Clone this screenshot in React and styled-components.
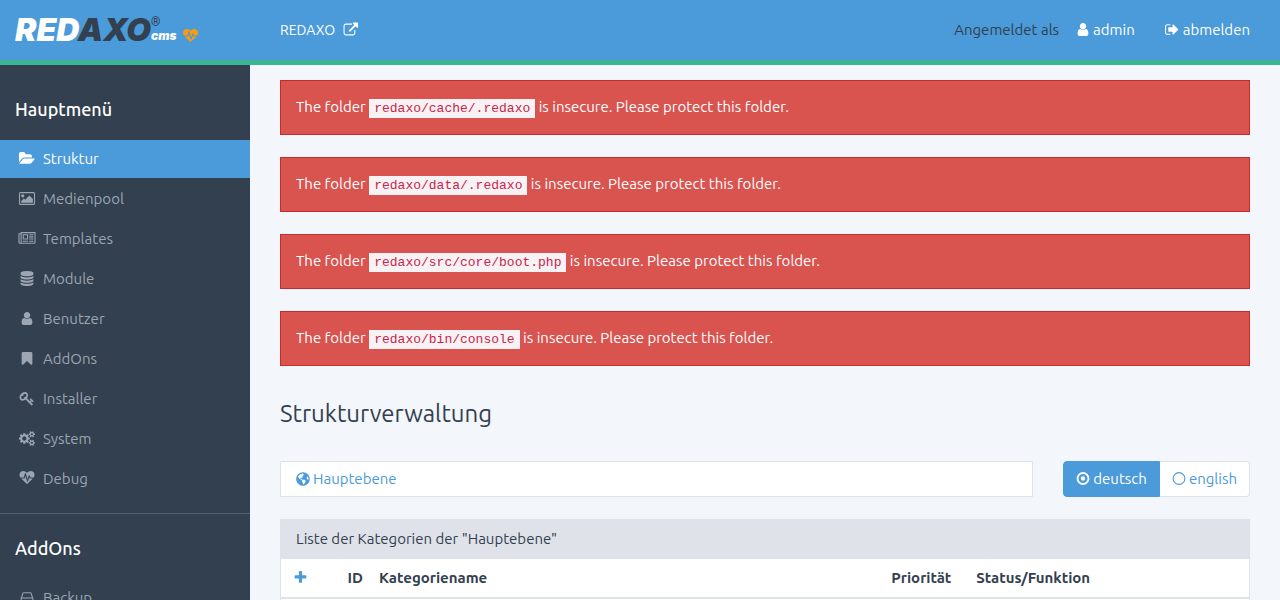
import React from "react";
import styled, { createGlobalStyle } from "styled-components";
import { FaGlobeAmericas } from "react-icons/fa";

const c = {
  blue: "#4b9ad9",
  green: "#3bb594",
  dark: "#324050",
  muted: "#9ca5b2",
  page: "#f3f6fb",
  line: "#dfe3e9",
};

const Global = createGlobalStyle`
  *, *::before, *::after { box-sizing: border-box; }
  body {
    margin: 0;
    background: ${c.page};
    color: ${c.dark};
    font: 15px/22px "Ubuntu", "Noto Sans", sans-serif;
  }
  a { color: inherit; text-decoration: none; }
`;

/* Glyphs on a 1792-unit em: advance box [left, width] and outline. */
const glyphs = {
  user: [256, 1280, "M1536 1399q0 109-62.5 187t-150.5 78h-854q-88 0-150.5-78t-62.5-187q0-85 8.5-160.5t31.5-152 58.5-131 94-89 134.5-34.5q131 128 313 128t313-128q76 0 134.5 34.5t94 89 58.5 131 31.5 152 8.5 160.5zm-256-887q0 159-112.5 271.5t-271.5 112.5-271.5-112.5-112.5-271.5 112.5-271.5 271.5-112.5 271.5 112.5 112.5 271.5z"],
  signOut: [64, 1664, "M704 1440q0 4 1 20t.5 26.5-3 23.5-10 19.5-20.5 6.5h-320q-119 0-203.5-84.5t-84.5-203.5v-704q0-119 84.5-203.5t203.5-84.5h320q13 0 22.5 9.5t9.5 22.5q0 4 1 20t.5 26.5-3 23.5-10 19.5-20.5 6.5h-320q-66 0-113 47t-47 113v704q0 66 47 113t113 47h312l11.5 1 11.5 3 8 5.5 7 9 2 13.5zm928-544q0 26-19 45l-544 544q-19 19-45 19t-45-19-19-45v-288h-448q-26 0-45-19t-19-45v-384q0-26 19-45t45-19h448v-288q0-26 19-45t45-19 45 19l544 544q19 19 19 45z"],
  external: [0, 1792, "M1472 992v320q0 119-84.5 203.5t-203.5 84.5h-832q-119 0-203.5-84.5t-84.5-203.5v-832q0-119 84.5-203.5t203.5-84.5h704q14 0 23 9t9 23v64q0 14-9 23t-23 9h-704q-66 0-113 47t-47 113v832q0 66 47 113t113 47h832q66 0 113-47t47-113v-320q0-14 9-23t23-9h64q14 0 23 9t9 23zm320-864v512q0 26-19 45t-45 19-45-19l-176-176-652 652q-10 10-23 10t-23-10l-114-114q-10-10-10-23t10-23l652-652-176-176q-19-19-19-45t19-45 45-19h512q26 0 45 19t19 45z"],
  folder: [0, 1920, "M1879 952q0 31-31 66l-336 396q-43 51-120.5 86.5t-143.5 35.5h-1088q-34 0-60.5-13t-26.5-43q0-31 31-66l336-396q43-51 120.5-86.5t143.5-35.5h1088q34 0 60.5 13t26.5 43zm-343-344v160h-832q-94 0-197 47.5t-164 119.5l-337 396-5 6q0-4-.5-12.5t-.5-12.5v-960q0-92 66-158t158-66h320q92 0 158 66t66 158v32h544q92 0 158 66t66 158z"],
  image: [-64, 1920, "M576 576q0 80-56 136t-136 56-136-56-56-136 56-136 136-56 136 56 56 136zm1024 384v448h-1408v-192l320-320 160 160 512-512zm96-704h-1600q-13 0-22.5 9.5t-9.5 22.5v1216q0 13 9.5 22.5t22.5 9.5h1600q13 0 22.5-9.5t9.5-22.5v-1216q0-13-9.5-22.5t-22.5-9.5zm160 32v1216q0 66-47 113t-113 47h-1600q-66 0-113-47t-47-113v-1216q0-66 47-113t113-47h1600q66 0 113 47t47 113z"],
  newspaper: [0, 2048, "M1024 512h-384v384h384v-384zm128 640v128h-640v-128h640zm0-768v640h-640v-640h640zm640 768v128h-512v-128h512zm0-256v128h-512v-128h512zm0-256v128h-512v-128h512zm0-256v128h-512v-128h512zm-1536 960v-960h-128v960q0 26 19 45t45 19 45-19 19-45zm1664 0v-1088h-1536v1088q0 33-11 64h1483q26 0 45-19t19-45zm128-1216v1216q0 80-56 136t-136 56h-1664q-80 0-136-56t-56-136v-1088h256v-128h1792z"],
  database: [128, 1536, "M896 768q237 0 443-43t325-127v170q0 69-103 128t-280 93.5-385 34.5-385-34.5-280-93.5-103-128v-170q119 84 325 127t443 43zm0 768q237 0 443-43t325-127v170q0 69-103 128t-280 93.5-385 34.5-385-34.5-280-93.5-103-128v-170q119 84 325 127t443 43zm0-384q237 0 443-43t325-127v170q0 69-103 128t-280 93.5-385 34.5-385-34.5-280-93.5-103-128v-170q119 84 325 127t443 43zm0-1152q208 0 385 34.5t280 93.5 103 128v128q0 69-103 128t-280 93.5-385 34.5-385-34.5-280-93.5-103-128v-128q0-69 103-128t280-93.5 385-34.5z"],
  bookmark: [256, 1280, "M1420 128q23 0 44 9 33 13 52.5 41t19.5 62v1289q0 34-19.5 62t-52.5 41q-19 8-44 8-48 0-83-32l-441-424-441 424q-36 33-83 33-23 0-44-9-33-13-52.5-41t-19.5-62v-1289q0-34 19.5-62t52.5-41q21-9 44-9h1048z"],
  key: [64, 1664, "M832 512q0-80-56-136t-136-56-136 56-56 136q0 42 19 83-41-19-83-19-80 0-136 56t-56 136 56 136 136 56 136-56 56-136q0-42-19-83 41 19 83 19 80 0 136-56t56-136zm851 704q0 17-49 66t-66 49q-9 0-28.5-16t-36.5-33-38.5-40-24.5-26l-96 96 220 220q28 28 28 68 0 42-39 81t-81 39q-40 0-68-28l-671-671q-176 131-365 131-163 0-265.5-102.5t-102.5-265.5q0-160 95-313t248-248 313-95q163 0 265.5 102.5t102.5 265.5q0 189-131 365l355 355 96-96q-3-3-26-24.5t-40-38.5-33-36.5-16-28.5q0-17 49-66t66-49q13 0 23 10 6 6 46 44.5t82 79.5 86.5 86 73 78 28.5 41z"],
  cogs: [-64, 1920, "M832 896q0-106-75-181t-181-75-181 75-75 181 75 181 181 75 181-75 75-181zm768 512q0-52-38-90t-90-38-90 38-38 90q0 53 37.5 90.5t90.5 37.5 90.5-37.5 37.5-90.5zm0-1024q0-52-38-90t-90-38-90 38-38 90q0 53 37.5 90.5t90.5 37.5 90.5-37.5 37.5-90.5zm-384 421v185q0 10-7 19.5t-16 10.5l-155 24q-11 35-32 76 34 48 90 115 7 11 7 20 0 12-7 19-23 30-82.5 89.5t-78.5 59.5q-11 0-21-7l-115-90q-37 19-77 31-11 108-23 155-7 24-30 24h-186q-11 0-20-7.5t-10-17.5l-23-153q-34-10-75-31l-118 89q-7 7-20 7-11 0-21-8-144-133-144-160 0-9 7-19 10-14 41-53t47-61q-23-44-35-82l-152-24q-10-1-17-9.5t-7-19.5v-185q0-10 7-19.5t16-10.5l155-24q11-35 32-76-34-48-90-115-7-11-7-20 0-12 7-20 22-30 82-89t79-59q11 0 21 7l115 90q34-18 77-32 11-108 23-154 7-24 30-24h186q11 0 20 7.5t10 17.5l23 153q34 10 75 31l118-89q8-7 20-7 11 0 21 8 144 133 144 160 0 8-7 19-12 16-42 54t-45 60q23 48 34 82l152 23q10 2 17 10.5t7 19.5zm640 533v140q0 16-149 31-12 27-30 52 51 113 51 138 0 4-4 7-122 71-124 71-8 0-46-47t-52-68q-20 2-30 2t-30-2q-14 21-52 68t-46 47q-2 0-124-71-4-3-4-7 0-25 51-138-18-25-30-52-149-15-149-31v-140q0-16 149-31 13-29 30-52-51-113-51-138 0-4 4-7 4-2 35-20t59-34 30-16q8 0 46 46.5t52 67.5q20-2 30-2t30 2q51-71 92-112l6-2q4 0 124 70 4 3 4 7 0 25-51 138 17 23 30 52 149 15 149 31zm0-1024v140q0 16-149 31-12 27-30 52 51 113 51 138 0 4-4 7-122 71-124 71-8 0-46-47t-52-68q-20 2-30 2t-30-2q-14 21-52 68t-46 47q-2 0-124-71-4-3-4-7 0-25 51-138-18-25-30-52-149-15-149-31v-140q0-16 149-31 13-29 30-52-51-113-51-138 0-4 4-7 4-2 35-20t59-34 30-16q8 0 46 46.5t52 67.5q20-2 30-2t30 2q51-71 92-112l6-2q4 0 124 70 4 3 4 7 0 25-51 138 17 23 30 52 149 15 149 31z"],
  heartbeat: [0, 1792, "M1280 896h305q-5 6-10 10.5t-9 7.5l-3 4-623 600q-18 18-44 18t-44-18l-624-602q-5-2-21-20h369q22 0 39.5-13.5t22.5-34.5l70-281 190 667q6 20 23 33t39 13q21 0 38-13t23-33l146-485 56 112q18 35 57 35zm512-428q0 145-103 300h-369l-111-221q-8-17-25.5-27t-36.5-8q-45 5-56 46l-129 430-196-686q-6-20-23.5-33t-39.5-13-39 13.5-22 34.5l-116 464h-423q-103-155-103-300 0-220 127-344t351-124q62 0 126.5 21.5t120 58 95.5 68.5 76 68q36-36 76-68t95.5-68.5 120-58 126.5-21.5q224 0 351 124t127 344z"],
  plus: [192, 1408, "M1600 736v192q0 40-28 68t-68 28h-416v416q0 40-28 68t-68 28h-192q-40 0-68-28t-28-68v-416h-416q-40 0-68-28t-28-68v-192q0-40 28-68t68-28h416v-416q0-40 28-68t68-28h192q40 0 68 28t28 68v416h416q40 0 68 28t28 68z"],
  disk: [128, 1536, "M1536 1376v-320q0-13-9.500-22.500t-22.500-9.500h-1216q-13 0-22.500 9.500t-9.500 22.500v320q0 13 9.500 22.500t22.500 9.500h1216q13 0 22.500-9.500t9.500-22.500zm-1230-480h1180l-157-482q-4-13-16-21.500t-26-8.500h-782q-14 0-26 8.500t-16 21.500zm1358 160v320q0 66-47 113t-113 47h-1216q-66 0-113-47t-47-113v-320q0-25 16-75l197-606q17-53 63-86t101-33h782q55 0 101 33t63 86l197 606q16 50 16 75z"],
  dotCircle: [128, 1536, "M896 640a256 256 0 1 1 0 512a256 256 0 1 1 0-512zM896 352a544 544 0 1 0 0 1088a544 544 0 1 0 0-1088zM896 128a768 768 0 1 1 0 1536a768 768 0 1 1 0-1536z"],
  circle: [128, 1536, "M896 256a640 640 0 1 0 0 1280a640 640 0 1 0 0-1280zM896 128a768 768 0 1 1 0 1536a768 768 0 1 1 0-1536z"],
};

const Svg = styled.svg`
  display: block;
  flex: none;
  fill: currentColor;
  width: ${(p) => p.$width}px;
  height: 15px;
  margin-bottom: 1px;
`;

function Icon({ name, width = 15 }) {
  const [left, advance, d] = glyphs[name];
  const units = (width * 1792) / 15;
  return (
    <Svg $width={width} viewBox={`${left + (advance - units) / 2} 0 ${units} 1792`} aria-hidden="true">
      <path d={d} />
    </Svg>
  );
}

const Header = styled.header`
  display: flex;
  align-items: center;
  height: 65px;
  padding-right: 30px;
  background: ${c.blue};
  border-bottom: 5px solid ${c.green};
  color: #fff;
`;

const Brand = styled.a`
  display: flex;
  flex: none;
  align-items: flex-end;
  width: 280px;
  height: 24px;
  padding-left: 15px;
  font-family: "Inter", sans-serif;
  font-style: italic;
  font-weight: 900;
`;

const Wordmark = styled.span`
  font-size: 32px;
  line-height: 24px;
  span { color: ${c.dark}; }
`;

const BrandNote = styled.span`
  display: flex;
  flex-direction: column;
  justify-content: space-between;
  height: 24px;
  font-size: 12px;
  line-height: 12px;
  sup {
    color: ${c.dark};
    font-family: "Roboto", sans-serif;
    font-size: 12px;
    font-style: normal;
    font-weight: 500;
    line-height: 8px;
  }
`;

const BrandBadge = styled.span`
  margin: 0 0 -3px 6px;
  color: #fd9b0b;
`;

const SiteLink = styled.a`
  display: flex;
  align-items: center;
  gap: 8px;
  font-size: 14px;
`;

const UserNav = styled.nav`
  display: flex;
  align-items: center;
  margin-left: auto;
`;

const UserLabel = styled.span`
  margin-right: 18px;
  color: ${c.dark};
`;

const IconLink = styled.a`
  display: flex;
  align-items: center;
  gap: ${(p) => p.$gap || 4}px;
  & + & { margin-left: 30px; }
`;

const Body = styled.div`
  display: flex;
  height: calc(100vh - 65px);
  overflow: hidden;
`;

const Sidebar = styled.nav`
  flex: none;
  width: 250px;
  background: ${c.dark};
  overflow: hidden;
`;

const NavGroup = styled.section`
  padding: 33px 0 15px;
  & + & {
    padding-top: 23px;
    border-top: 1px solid #51606f;
  }
`;

const NavTitle = styled.h4`
  margin: 0 0 20px;
  padding: 0 15px;
  color: #fff;
  font-size: 18px;
  font-weight: 500;
  line-height: 22px;
`;

const NavList = styled.ul`
  display: grid;
  gap: 2px;
  margin: 0;
  padding: 0;
  list-style: none;
`;

const NavLink = styled.a`
  display: flex;
  align-items: center;
  gap: 6px;
  height: 38px;
  padding: 0 17px;
  background: ${(p) => (p.$active ? c.blue : "transparent")};
  color: ${(p) => (p.$active ? "#fff" : c.muted)};
`;

const Main = styled.main`
  flex: 1;
  min-width: 0;
  padding: 15px 30px;
  overflow: hidden;
`;

const Alerts = styled.div`
  display: grid;
  gap: 22px;
`;

const Alert = styled.div`
  padding: 14px 15px 16px;
  border: 1px solid #c92a2a;
  background: #d9534f;
  color: #fff;
  line-height: 23px;
  code {
    padding: 2px 5px;
    background: #f9f2f4;
    color: #c7254e;
    font-family: "Liberation Mono", monospace;
    font-size: 13px;
    line-height: 15px;
  }
`;

const PageTitle = styled.h1`
  margin: 32px 0 31px;
  font-size: 24px;
  font-weight: 400;
  line-height: 32px;
`;

const Toolbar = styled.div`
  display: flex;
  gap: 30px;
  margin-bottom: 22px;
`;

const Breadcrumb = styled.nav`
  display: flex;
  flex: 1;
  align-items: center;
  height: 36px;
  padding: 0 15px;
  border: 1px solid ${c.line};
  background: #fff;
  color: ${c.blue};
`;

const Switch = styled.div`
  display: flex;
`;

const SwitchButton = styled.button`
  display: flex;
  align-items: center;
  gap: 3px;
  height: 36px;
  padding: 0 12px;
  border: 1px solid ${(p) => (p.$active ? c.blue : c.line)};
  background: ${(p) => (p.$active ? c.blue : "#fff")};
  color: ${(p) => (p.$active ? "#fff" : c.blue)};
  font: inherit;
  &:first-child { border-radius: 4px 0 0 4px; }
  &:last-child { border-left: 0; border-radius: 0 4px 4px 0; }
`;

const Panel = styled.section`
  border: 1px solid ${c.line};
  background: #fff;
`;

const PanelTitle = styled.header`
  padding: 7px 15px 9px;
  background: ${c.line};
  line-height: 23px;
`;

const Table = styled.table`
  width: 100%;
  border-collapse: collapse;
  table-layout: fixed;
`;

const Th = styled.th`
  width: ${(p) => p.$width};
  height: 39px;
  padding: 0 8px;
  padding-left: ${(p) => (p.$first ? "12px" : "8px")};
  border-bottom: 2px solid ${c.line};
  text-align: ${(p) => p.$align || "left"};
  a { color: ${c.blue}; }
`;

const Td = styled.td`
  height: 40px;
`;

const menu = [
  ["folder", "Struktur"],
  ["image", "Medienpool"],
  ["newspaper", "Templates"],
  ["database", "Module"],
  ["user", "Benutzer"],
  ["bookmark", "AddOns"],
  ["key", "Installer"],
  ["cogs", "System"],
  ["heartbeat", "Debug"],
];

const folders = [
  "redaxo/cache/.redaxo",
  "redaxo/data/.redaxo",
  "redaxo/src/core/boot.php",
  "redaxo/bin/console",
];

function Menu({ title, items, active }) {
  return (
    <NavGroup>
      <NavTitle>{title}</NavTitle>
      <NavList>
        {items.map(([icon, label]) => (
          <li key={label}>
            <NavLink href="#" $active={label === active}>
              <Icon name={icon} width={20} />
              {label}
            </NavLink>
          </li>
        ))}
      </NavList>
    </NavGroup>
  );
}

export default function App() {
  return (
    <>
      <Global />
      <Header>
        <Brand href="#">
          <Wordmark>RED<span>AXO</span></Wordmark>
          <BrandNote><sup>®</sup>cms</BrandNote>
          <BrandBadge><Icon name="heartbeat" /></BrandBadge>
        </Brand>
        <SiteLink href="#">REDAXO <Icon name="external" /></SiteLink>
        <UserNav>
          <UserLabel>Angemeldet als</UserLabel>
          <IconLink href="#"><Icon name="user" width={12} />admin</IconLink>
          <IconLink href="#"><Icon name="signOut" width={14} />abmelden</IconLink>
        </UserNav>
      </Header>
      <Body>
        <Sidebar>
          <Menu title="Hauptmenü" items={menu} active="Struktur" />
          <Menu title="AddOns" items={[["disk", "Backup"]]} />
        </Sidebar>
        <Main>
          <Alerts>
            {folders.map((path) => (
              <Alert key={path} role="alert">
                The folder <code>{path}</code> is insecure. Please protect this folder.
              </Alert>
            ))}
          </Alerts>
          <PageTitle>Strukturverwaltung</PageTitle>
          <Toolbar>
            <Breadcrumb>
              <IconLink href="#" $gap={3}><FaGlobeAmericas size={14} />Hauptebene</IconLink>
            </Breadcrumb>
            <Switch>
              <SwitchButton type="button" $active><Icon name="dotCircle" width={14} />deutsch</SwitchButton>
              <SwitchButton type="button"><Icon name="circle" width={14} />english</SwitchButton>
            </Switch>
          </Toolbar>
          <Panel>
            <PanelTitle>Liste der Kategorien der "Hauptebene"</PanelTitle>
            <Table>
              <thead>
                <tr>
                  <Th $width="48px" $first><a href="#" aria-label="Kategorie hinzufügen"><Icon name="plus" /></a></Th>
                  <Th $width="42px" $align="right">ID</Th>
                  <Th>Kategoriename</Th>
                  <Th $width="85px">Priorität</Th>
                  <Th $width="29%">Status/Funktion</Th>
                </tr>
              </thead>
              <tbody>
                <tr><Td colSpan={5} /></tr>
              </tbody>
            </Table>
          </Panel>
        </Main>
      </Body>
    </>
  );
}
